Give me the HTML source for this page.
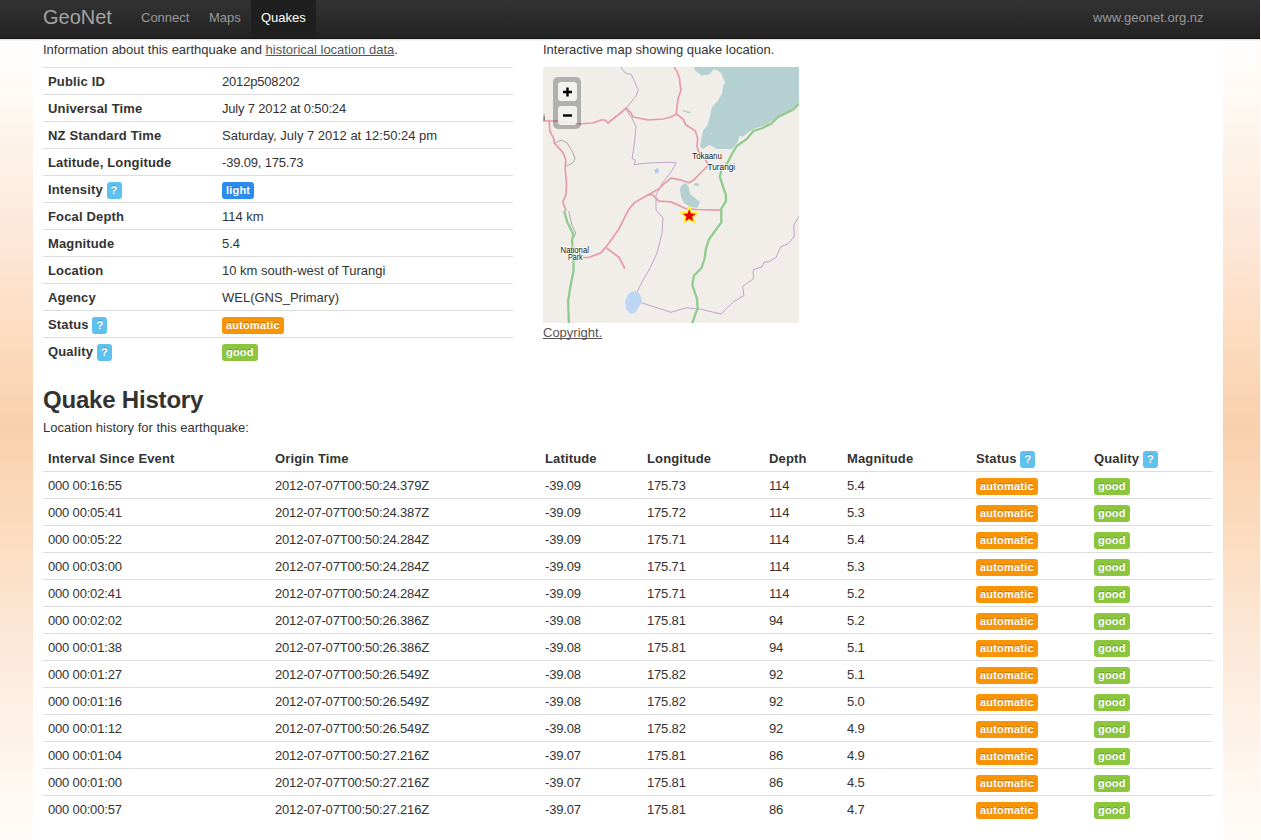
<!DOCTYPE html>
<html><head><meta charset="utf-8"><title>GeoNet Quake</title>
<style>
*{box-sizing:content-box}
html,body{margin:0;padding:0}
body{width:1261px;height:840px;overflow:hidden;position:relative;font-family:"Liberation Sans",sans-serif;font-size:13px;line-height:18px;color:#333;
background:linear-gradient(to bottom,#fffefd 40px,#fffdfa 70px,#fdf2e8 150px,#fee6d6 250px,#fbdcbf 340px,#f9d0ac 425px,#fbdcbf 530px,#fce9d9 650px,#fff8f2 790px,#fffcf9 840px);}
#edge{position:absolute;left:1260px;top:0;width:1px;height:840px;background:#fffaf5}
#nav{position:absolute;z-index:5;left:0;top:0;width:1260px;height:38px;background:linear-gradient(to bottom,#333 0,#222 100%);box-shadow:0 1px 0 #e4e4e4,0 2px 0 #f4f4f4;border-bottom:1px solid #111}
#nav .brand{position:absolute;left:43px;top:7px;font-size:20px;line-height:20px;color:#a3a3a3}
#nav a{position:absolute;top:8px;line-height:19px;color:#999;font-size:13px;text-decoration:none}
#nav .active{position:absolute;left:251px;top:0;width:65px;height:38px;background:#1f1f1f}
#nav .site{color:#999}
#wrap{position:absolute;left:33px;top:38px;width:1190px;height:802px;background:#fff}
.p{position:absolute;white-space:nowrap}
a.u{color:#555;text-decoration:underline;text-decoration-skip-ink:none}
table{border-collapse:collapse;border-spacing:0;position:absolute}
td,th{padding:5px 5px 3px;line-height:18px;border-top:1px solid #ddd;text-align:left;vertical-align:top;white-space:nowrap}
th{font-weight:bold;letter-spacing:.15px}
#info td:first-child{font-weight:bold;letter-spacing:.15px}
.lbl{display:inline-block;letter-spacing:.2px;font-size:11px;font-weight:bold;line-height:14px;color:#fff;padding:1px 4px 2px;border-radius:3px;text-shadow:0 -1px 0 rgba(0,0,0,.25);vertical-align:baseline}
.q{background:#5ec1ee}
.lt{background:#2b8ced}
.au{background:#f89406}
.gd{background:#8cc63f}
#hist td{letter-spacing:-.18px}#hist td .lbl{letter-spacing:.2px}.n{letter-spacing:-.18px}
h2{position:absolute;margin:0;font-size:24px;letter-spacing:-.2px;line-height:36px;font-weight:bold;color:#333}
</style></head>
<body>
<div id="edge"></div>
<div id="nav">
  <div class="brand">GeoNet</div>
  <a style="left:141px">Connect</a>
  <a style="left:209px">Maps</a>
  <div class="active"></div>
  <a style="left:261px;color:#fff">Quakes</a>
  <a style="left:1093px">www.geonet.org.nz</a>
</div>
<div id="wrap"></div>

<div class="p" style="left:43px;top:41px">Information about this earthquake and <a class="u">historical location data</a>.</div>
<div class="p" style="left:543px;top:41px">Interactive map showing quake location.</div>

<table id="info" style="left:43px;top:67px;width:470px">
<tr><td style="width:164px">Public ID</td><td class="n">2012p508202</td></tr>
<tr><td>Universal Time</td><td class="n">July 7 2012 at 0:50:24</td></tr>
<tr><td>NZ Standard Time</td><td>Saturday, July 7 2012 at 12:50:24 pm</td></tr>
<tr><td>Latitude, Longitude</td><td class="n">-39.09, 175.73</td></tr>
<tr><td>Intensity <span class="lbl q">?</span></td><td><span class="lbl lt">light</span></td></tr>
<tr><td>Focal Depth</td><td>114 km</td></tr>
<tr><td>Magnitude</td><td>5.4</td></tr>
<tr><td>Location</td><td>10 km south-west of Turangi</td></tr>
<tr><td>Agency</td><td>WEL(GNS_Primary)</td></tr>
<tr><td>Status <span class="lbl q">?</span></td><td><span class="lbl au">automatic</span></td></tr>
<tr><td>Quality <span class="lbl q">?</span></td><td><span class="lbl gd">good</span></td></tr>
</table>

<div id="map" style="position:absolute;left:543px;top:67px;width:256px;height:256px;background:#f1eee8;overflow:hidden"><svg width="256" height="256" viewBox="0 0 256 256" style="position:absolute;left:0;top:0">
<rect width="256" height="256" fill="#f1eee9"/>
<g fill="#b5d0d0">
<path d="M150.9,0 L152.4,3.8 L158.5,8.4 L166,7.6 L170.7,2.3 L173.7,3 L178,6 L182,15 L180,20 L179,27 L175,33.5 L169,40 L167,49 L164.6,58 L160,64 L158.5,71.6 L157,79 L160,82 L166,78 L169,79 L173.7,82 L189,82 L195,74.7 L196.6,68.6 L199.6,70 L207,64 L213,61 L222.5,58 L231.6,52 L243.8,45.7 L250,41 L256,35 L256,0 Z"/>
<path d="M139,118 L143,116 L146,121 L147,127 L152,131 L157,135 L154,141 L147,140 L141,136 L138,130 L137,122 Z"/>
<ellipse cx="153.5" cy="117.5" rx="2.8" ry="1.6"/>
<path d="M140,43 L148,45 L147,46.5 L140,44.5Z"/>
</g>
<g fill="none" stroke-linejoin="round" stroke-linecap="round">
<path stroke="#aaa" stroke-width="1" d="M11.4,76.2 L18.3,73.1 L24.4,76.2 L29.7,85.3 L32,91.4 L29.7,96 L23.6,99"/>
<path stroke="#aaa" stroke-width="1" d="M25.9,144.8 L29,158.5 L32.8,166 L30.5,170.7"/>
<path stroke="#bfa3c9" stroke-width="1" d="M77.7,0 L82.3,6.1 L88.4,7.6 L95.2,22.9 L93,29 L84.6,39.6 L82.3,41.1 L88.4,50.3 L93,59.4 L91.4,76.2 L89.1,91.4 L92.2,93 L91.4,97.5 L106.7,96 L128,95.2 L133.3,96 L128,105 L120,115 L113,128 L113,143 L120,151 L119,166 L114,186 L107,201 L99,215 L90,233 L128,245.3 L143.2,240.8 L158.5,242.3 L170.7,245.3 L178.3,246.9 L190.5,234.7 L201,228.6 L199.6,219.4 L210.3,211.8 L210.3,202.7 L219.4,199.6 L221,195 L225.5,195 L233,190.5 L237.7,179.8 L245.3,176.8 L251.4,169 L250.7,158.5 L256,149.3"/>
<g stroke="#e79ba6" stroke-width="1.7">
<path d="M0,54 L15,54 L35,57 L50,56 L58,53 L62,53 L65,56 L70,52 L80,44 L83,41 L88,46 L90,50 L105,53 L120,52 L128,50 L133.3,47"/>
<path d="M131,0 L134,4.6 L136.4,10.7 L137,16.8 L138,23 L135,32 L134,39.6 L133.3,47 L140,52 L143,58 L152.4,64 L154.7,71.6 L154,79 L155.4,84 L161.5,91.4 L165.3,97.5"/>
<path d="M164.6,99 L158.5,105 L150.9,112.8 L146.3,115.8 L137.1,112.8 L128,111.2 L122,115.8 L115.8,122 L105,128 L91.4,135.6 L85.3,143.2 L76.2,161.5 L65.5,176.8 L57.9,185.9 L45.7,190.5 L41,190.5"/>
<path d="M64,181.3 L76.2,190.5 L81.5,201"/>
<path d="M105,128 L109.7,128 L115.8,134.1 L128,134.9 L143.2,141.7 L154,142.5 L178,143.2"/>
<path d="M6.1,53.3 L6.9,64 L10.7,71.6 L11.4,76.2 L19.8,85.3 L22.9,93 L22.1,100.6 L23.6,117.3 L22.9,128 L19.8,134.9 L22.9,143.2"/>
</g>
<g stroke="#8fcb8d" stroke-width="2.3">
<path d="M256,36.6 L250,42.7 L234.7,50.3 L228.6,56.4 L219.4,61 L210.3,64 L204.2,71.6 L193.5,79.2 L189,87 L184.4,96 L178.3,103.6 L176.8,109.7 L179.8,118.9 L182.9,128 L182.9,134.1 L178.3,141.7 L178.3,155.4 L166,172.2 L163,181.3 L161.5,192 L158.5,201 L150.9,208.8 L149.3,218 L153.9,231.6 L154.7,240.8 L149.3,256"/>
<path d="M21.3,144.8 L24.4,155.4 L30.5,167.6 L29,173.7 L30.5,189 L30.5,204 L27.4,219.4 L25.1,234.7 L25.9,256"/>
</g>
</g>
<path fill="#bcd6f3" d="M86,226 L92,224 L97,227 L99,234 L96,240 L92,246 L87,247 L83,242 L82,234 Z"/>
<path fill="#a9c9ee" d="M111,103 L115,101 L116,104 L113,107Z"/>
<g font-family="Liberation Sans, sans-serif" font-size="8.6" fill="#111" stroke="rgba(255,255,255,.85)" stroke-width="1.6" paint-order="stroke" stroke-linejoin="round">
<text x="149.3" y="91.8" textLength="29.5" lengthAdjust="spacingAndGlyphs">Tokaanu</text>
<text x="164.6" y="102.6" textLength="27.5" lengthAdjust="spacingAndGlyphs">Turangi</text>
<text x="17.6" y="185.6" textLength="28.3" lengthAdjust="spacingAndGlyphs">National</text>
<text x="25" y="192.5" textLength="14.6" lengthAdjust="spacingAndGlyphs">Park</text>
</g>
<polygon fill="#fff23a" stroke="#fff23a" stroke-width="1.5" stroke-linejoin="round" points="146.3,139.3 148.8,144.9 154.9,145.5 150.3,149.6 151.6,155.6 146.3,152.5 141.0,155.6 142.3,149.6 137.7,145.5 143.8,144.9"/><polygon fill="#ee0000" points="146.3,142.0 148.0,146.5 152.8,146.7 149.1,149.7 150.3,154.3 146.3,151.7 142.3,154.3 143.5,149.7 139.8,146.7 144.6,146.5"/>
<rect x="10" y="10" width="28" height="52" rx="5" fill="rgba(0,0,0,0.26)"/>
<rect x="15" y="15" width="19" height="19" rx="3" fill="rgba(255,255,255,0.82)"/>
<rect x="15" y="39" width="19" height="19" rx="3" fill="rgba(255,255,255,0.82)"/>
<path d="M24.5,20.5 v9 M20,25 h9" stroke="#000" stroke-width="2.4"/>
<path d="M20,48.5 h9" stroke="#000" stroke-width="2.4"/>
<rect x="0.6" y="49" width="1" height="4.5" fill="#444"/><rect x="0.6" y="47.2" width="1" height="1" fill="#666"/>
</svg>
</div>
<div class="p" style="left:543px;top:324px"><a class="u">Copyright.</a></div>

<h2 style="left:43px;top:382px">Quake History</h2>
<div class="p" style="left:43px;top:419px">Location history for this earthquake:</div>

<table id="hist" style="left:43px;top:445px;width:1170px">
<tr><th style="width:217px;border-top:0">Interval Since Event</th><th style="width:260px;border-top:0">Origin Time</th><th style="width:92px;border-top:0">Latitude</th><th style="width:112px;border-top:0">Longitude</th><th style="width:68px;border-top:0">Depth</th><th style="width:119px;border-top:0">Magnitude</th><th style="width:108px;border-top:0">Status <span class="lbl q">?</span></th><th style="border-top:0">Quality <span class="lbl q">?</span></th></tr>
<tr><td>000 00:16:55</td><td>2012-07-07T00:50:24.379Z</td><td>-39.09</td><td>175.73</td><td>114</td><td>5.4</td><td><span class="lbl au">automatic</span></td><td><span class="lbl gd">good</span></td></tr>
<tr><td>000 00:05:41</td><td>2012-07-07T00:50:24.387Z</td><td>-39.09</td><td>175.72</td><td>114</td><td>5.3</td><td><span class="lbl au">automatic</span></td><td><span class="lbl gd">good</span></td></tr>
<tr><td>000 00:05:22</td><td>2012-07-07T00:50:24.284Z</td><td>-39.09</td><td>175.71</td><td>114</td><td>5.4</td><td><span class="lbl au">automatic</span></td><td><span class="lbl gd">good</span></td></tr>
<tr><td>000 00:03:00</td><td>2012-07-07T00:50:24.284Z</td><td>-39.09</td><td>175.71</td><td>114</td><td>5.3</td><td><span class="lbl au">automatic</span></td><td><span class="lbl gd">good</span></td></tr>
<tr><td>000 00:02:41</td><td>2012-07-07T00:50:24.284Z</td><td>-39.09</td><td>175.71</td><td>114</td><td>5.2</td><td><span class="lbl au">automatic</span></td><td><span class="lbl gd">good</span></td></tr>
<tr><td>000 00:02:02</td><td>2012-07-07T00:50:26.386Z</td><td>-39.08</td><td>175.81</td><td>94</td><td>5.2</td><td><span class="lbl au">automatic</span></td><td><span class="lbl gd">good</span></td></tr>
<tr><td>000 00:01:38</td><td>2012-07-07T00:50:26.386Z</td><td>-39.08</td><td>175.81</td><td>94</td><td>5.1</td><td><span class="lbl au">automatic</span></td><td><span class="lbl gd">good</span></td></tr>
<tr><td>000 00:01:27</td><td>2012-07-07T00:50:26.549Z</td><td>-39.08</td><td>175.82</td><td>92</td><td>5.1</td><td><span class="lbl au">automatic</span></td><td><span class="lbl gd">good</span></td></tr>
<tr><td>000 00:01:16</td><td>2012-07-07T00:50:26.549Z</td><td>-39.08</td><td>175.82</td><td>92</td><td>5.0</td><td><span class="lbl au">automatic</span></td><td><span class="lbl gd">good</span></td></tr>
<tr><td>000 00:01:12</td><td>2012-07-07T00:50:26.549Z</td><td>-39.08</td><td>175.82</td><td>92</td><td>4.9</td><td><span class="lbl au">automatic</span></td><td><span class="lbl gd">good</span></td></tr>
<tr><td>000 00:01:04</td><td>2012-07-07T00:50:27.216Z</td><td>-39.07</td><td>175.81</td><td>86</td><td>4.9</td><td><span class="lbl au">automatic</span></td><td><span class="lbl gd">good</span></td></tr>
<tr><td>000 00:01:00</td><td>2012-07-07T00:50:27.216Z</td><td>-39.07</td><td>175.81</td><td>86</td><td>4.5</td><td><span class="lbl au">automatic</span></td><td><span class="lbl gd">good</span></td></tr>
<tr><td>000 00:00:57</td><td>2012-07-07T00:50:27.216Z</td><td>-39.07</td><td>175.81</td><td>86</td><td>4.7</td><td><span class="lbl au">automatic</span></td><td><span class="lbl gd">good</span></td></tr>
</table>
</body></html>
